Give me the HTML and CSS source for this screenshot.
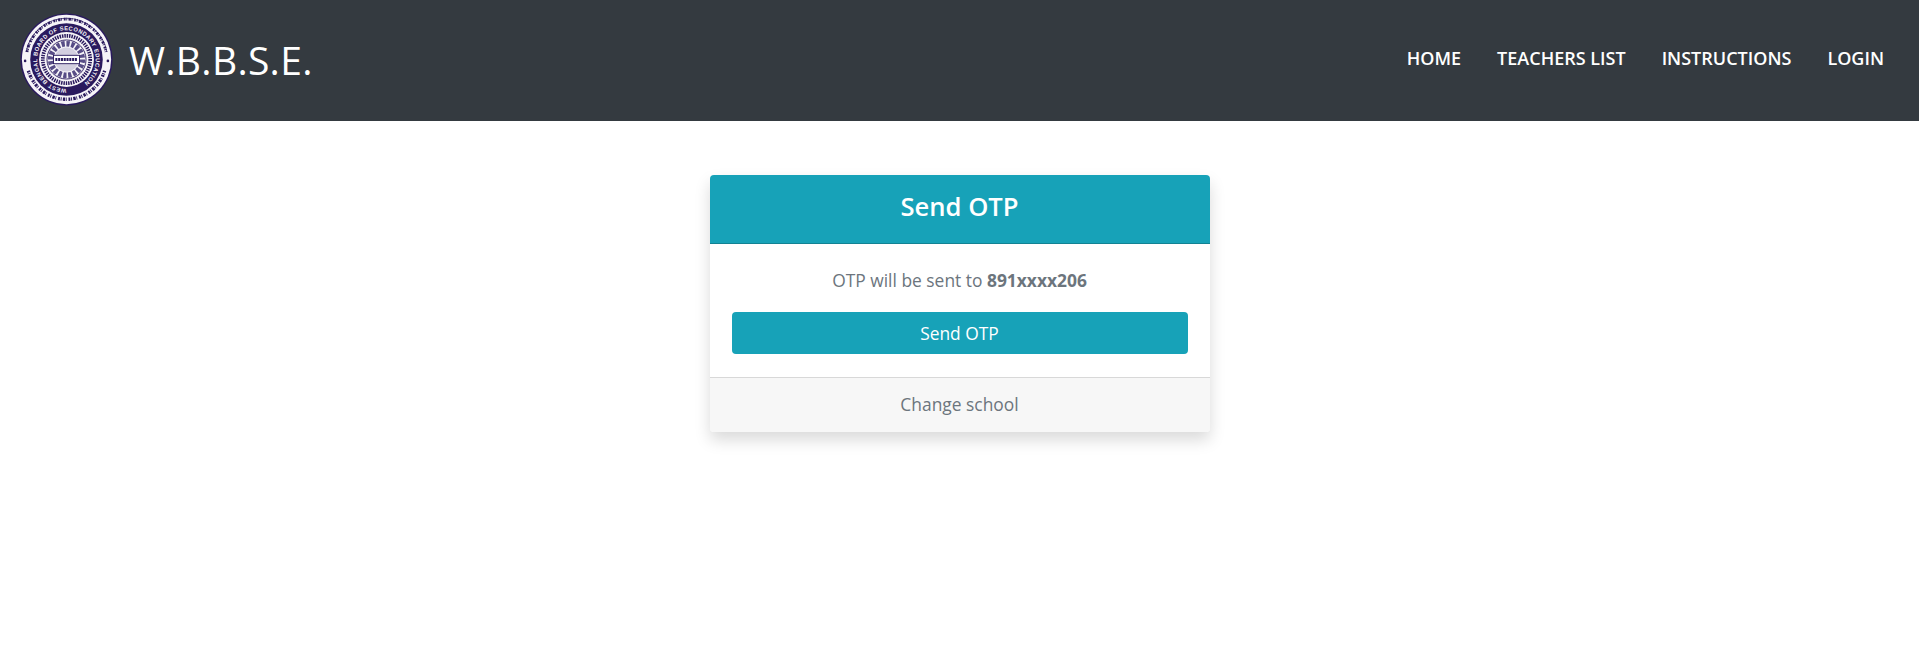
FILE: index.html
```html
<!DOCTYPE html>
<html lang="en">
<head>
    <meta charset="UTF-8">
    <meta name="viewport" content="width=device-width, initial-scale=1.0">
    <title>W.B.B.S.E.</title>
    <link rel="stylesheet" href="styles.css">
</head>
<body>
    <header class="topbar">
        <a class="brand" href="#">
            <svg class="logo" viewBox="0 0 100 100" width="93" height="93">
                <defs>
                    <path id="ringText" d="M50 81.5 A31.5 31.5 0 0 1 50 18.5 A31.5 31.5 0 0 1 50 81.5"/>
                </defs>
                <circle cx="50" cy="50" r="49.5" fill="#2a1a5e"/>
                <circle cx="50" cy="50" r="48" fill="#f6f4f8"/>
                <!-- outer band, script drawn as marks -->
                <path d="M6.5 42 A44.2 44.2 0 0 1 93.5 42" fill="none" stroke="#2a1a5e" stroke-width=".8"/>
                <path d="M7.5 42 A43.2 43.2 0 0 1 92.5 42" fill="none" stroke="#2a1a5e" stroke-width="3" stroke-dasharray="2 .8 1 1.4 2.6 .8 .8 2"/>
                <path d="M9 62 A42.7 42.7 0 0 0 91 62" fill="none" stroke="#2a1a5e" stroke-width="3.6" stroke-dasharray="2 .8 1 1.4 2.6 .8 .8 2"/>
                <circle cx="5.5" cy="51.5" r="1.4" fill="#2a1a5e"/>
                <circle cx="94.5" cy="51.5" r="1.4" fill="#2a1a5e"/>
                <!-- name band -->
                <circle cx="50" cy="50" r="39" fill="#2a1a5e"/>
                <circle cx="50" cy="50" r="29.5" fill="#f6f4f8"/>
                <text class="logoText"><textPath href="#ringText">WEST BENGAL BOARD OF SECONDARY EDUCATION</textPath></text>
                <!-- inner seal -->
                <circle cx="50" cy="50" r="25.5" fill="none" stroke="#2a1a5e" stroke-width="4" stroke-dasharray="1.6 1"/>
                <circle cx="50" cy="50" r="21" fill="#f6f4f8" stroke="#2a1a5e"/>
                <circle cx="50" cy="50" r="17" fill="none" stroke="#574c86" stroke-width="6" stroke-dasharray="3.5 1.8"/>
                <circle cx="50" cy="50" r="13" fill="#d3cfe0"/>
                <rect x="36" y="45.5" width="28" height="9" fill="#fff" stroke="#2a1a5e"/>
                <path d="M38 50h24" stroke="#2a1a5e" stroke-width="3" stroke-dasharray="2.2 .8"/>
            </svg>
            <span class="brandName">W.B.B.S.E.</span>
        </a>
        <nav class="mainNav">
            <a href="#">HOME</a>
            <a href="#">TEACHERS LIST</a>
            <a href="#">INSTRUCTIONS</a>
            <a href="#">LOGIN</a>
        </nav>
    </header>
    <main class="content">
        <div class="card">
            <div class="cardHead">Send OTP</div>
            <div class="cardBody">
                <p class="note">OTP will be sent to <b>891xxxx206</b></p>
                <button class="sendBtn" type="button">Send OTP</button>
            </div>
            <div class="cardFoot"><a href="#">Change school</a></div>
        </div>
    </main>
</body>
</html>
```

FILE: styles.css
```css
html,body{
    margin: 0;
    padding: 0;
    background: #fff;
    font-family: "Open Sans", "Noto Sans", "Liberation Sans", sans-serif;
}
a{
    text-decoration: none;
}
.topbar{
    display: flex;
    align-items: center;
    justify-content: space-between;
    height: 121px;
    padding: 0 35px 0 20px;
    background: #343a40;
    box-sizing: border-box;
}
.brand{
    display: flex;
    align-items: center;
    gap: 16px;
    color: #fff;
}
.logo{
    display: block;
    margin-bottom: 3px;
}
.logoText{
    font-family: "Liberation Sans", sans-serif;
    font-size: 6.2px;
    font-weight: bold;
    letter-spacing: .45px;
    fill: #f6f4f8;
}
.brandName{
    margin-bottom: 2px;
    font-size: 39px;
    font-weight: 400;
    letter-spacing: .3px;
}
.mainNav{
    display: flex;
    gap: 36px;
    margin-bottom: 6px;
}
.mainNav a{
    color: #fff;
    font-size: 18px;
    font-weight: 600;
}
.content{
    display: flex;
    justify-content: center;
    min-height: 473px;
    padding-top: 54px;
    box-sizing: border-box;
}
.card{
    width: 500px;
    height: 257px;
    border-radius: 4px;
    background: #fff;
    box-shadow: 0 8px 16px rgba(0, 0, 0, 0.15);
}
.cardHead{
    height: 69px;
    line-height: 63px;
    background: #17a2b8;
    border-bottom: 1px solid #128293;
    border-radius: 4px 4px 0 0;
    box-sizing: border-box;
    color: #fff;
    text-align: center;
    font-size: 25.6px;
    font-weight: 600;
}
.cardBody{
    padding: 23px 22px 23px;
    text-align: center;
}
.note{
    margin: 0 0 19px;
    color: #6c757d;
    font-size: 17.4px;
    line-height: 26px;
}
.sendBtn{
    display: block;
    width: 100%;
    height: 42px;
    border: 0;
    border-radius: 4px;
    background: #17a2b8;
    color: #fff;
    font: inherit;
    font-size: 17.4px;
}
.cardFoot{
    height: 55px;
    line-height: 52px;
    background: #f7f7f7;
    border-top: 1px solid #d8d8d8;
    border-radius: 0 0 4px 4px;
    box-sizing: border-box;
    text-align: center;
    font-size: 17.4px;
}
.cardFoot a{
    color: #6c757d;
}
```
